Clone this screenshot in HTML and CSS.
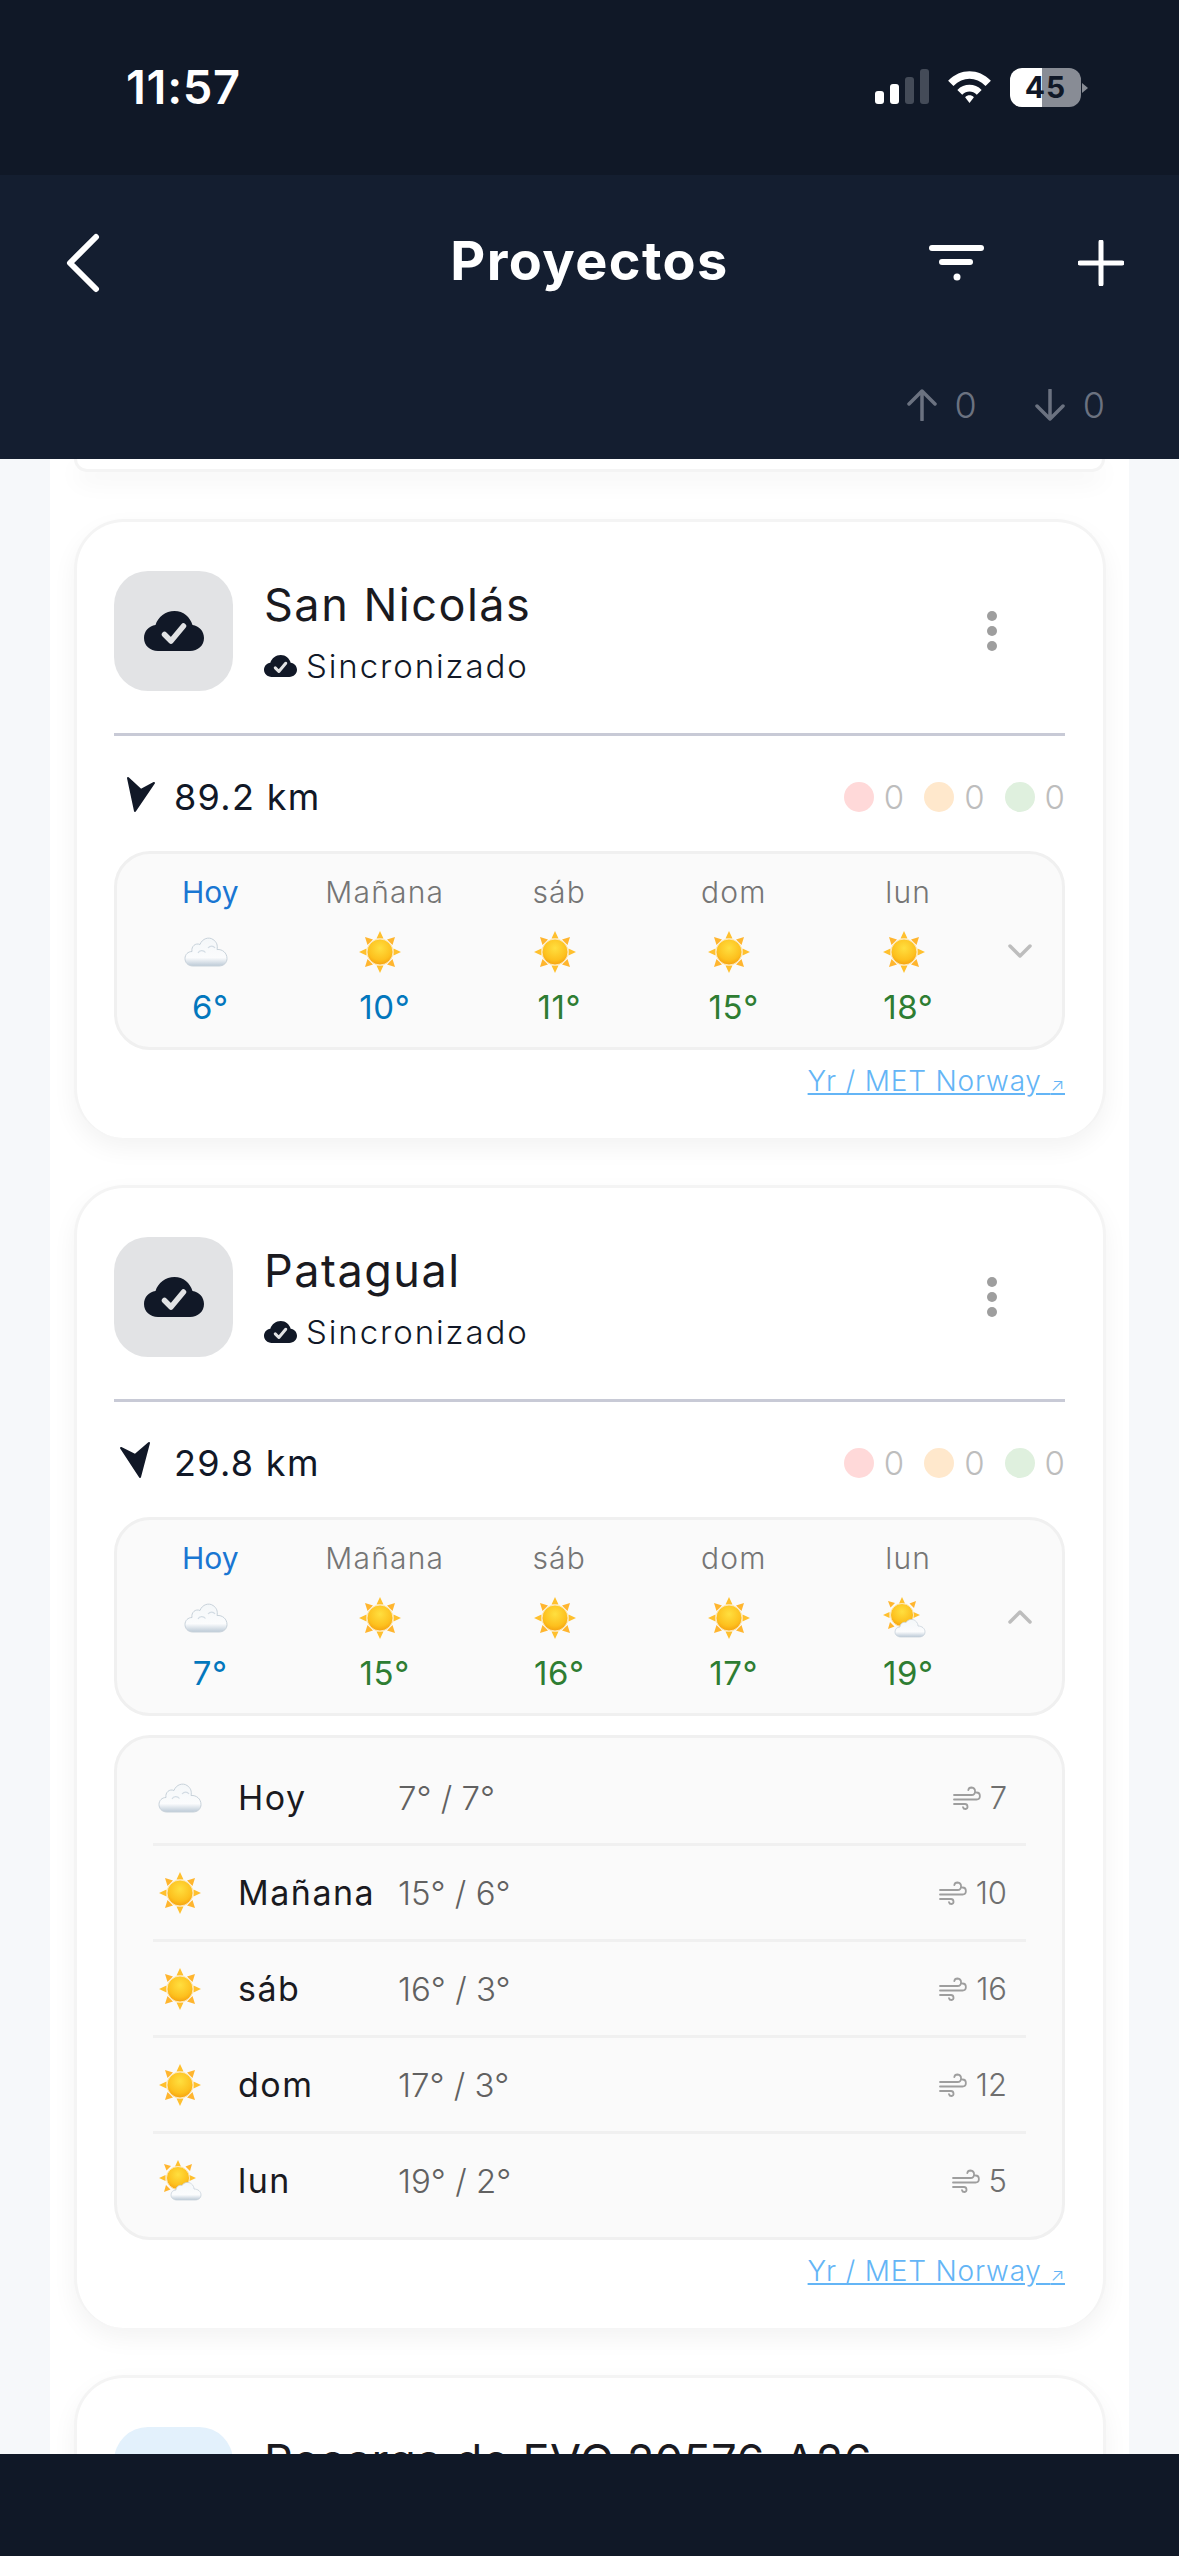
FILE: index.html
```html
<!doctype html>
<html lang="es">
    <head>
        <meta charset="UTF-8" />
        <title>Proyectos</title>
        <link rel="stylesheet" href="styles.css">
    </head>
    <body>
        <svg class="icon-defs" aria-hidden="true">
            <defs>
                <radialGradient id="disc" cx="50%" cy="35%" r="70%">
                    <stop offset="0" stop-color="#ffdf3f" />
                    <stop offset="0.65" stop-color="#fdc01e" />
                    <stop offset="1" stop-color="#f39a0c" />
                </radialGradient>
                <linearGradient id="fluff" x1="0" y1="0" x2="0" y2="1">
                    <stop offset="0" stop-color="#f4f7f9" />
                    <stop offset="0.7" stop-color="#fbfcfd" />
                    <stop offset="1" stop-color="#bccad7" />
                </linearGradient>
                <symbol id="rays" viewBox="0 0 44 44">
                    <path d="M22 1l3.500 7.500h-7zM22 43l-3.500-7.500h7zM1 22l7.500-3.500v7zM43 22l-7.500 3.500v-7z" fill="#ffc02e" />
                    <path d="M7 7l8 2.500-5.500 5.500zM37 7l-2.500 8-5.500-5.500zM7 37l2.500-8 5.500 5.500zM37 37l-8-2.500 5.500-5.500z" fill="#ffb52e" />
                </symbol>
                <symbol id="sun" viewBox="0 0 44 44">
                    <use href="#rays" />
                    <circle cx="22" cy="22" r="13" fill="url(#disc)" stroke="#ffe9b8" stroke-width="1" />
                </symbol>
                <symbol id="cloud" viewBox="0 0 44 44">
                    <path d="M9 36C3.500 36 1 32 1 28.500C1 24.500 4 21.500 8 21.500C7 16.500 11.500 12.500 16 14.500C18 8.500 25 6.500 29 9.500C32.500 11.500 34 15.500 33 19.500C38.500 19 43 23 43 28.500C43 32.500 40 36 35 36Z" fill="url(#fluff)" stroke="#c8d2da" stroke-width="1" />
                    <path d="M14 23c1.500-3 5.500-3 7.500-.5M24 18c2-2.500 5.500-2.500 7 0" fill="none" stroke="#d3dce4" stroke-width="1.200" />
                </symbol>
                <symbol id="sun-cloud" viewBox="0 0 44 44">
                    <path d="M20 1l3 6.500h-6zM1 19l6.500-3v6zM38 19l-6.500 3v-6zM20 38l-3-6.500h6z" fill="#ffc02e" />
                    <path d="M6 5l7 2-4.500 4.500zM34 5l-2 7-4.500-4.500zM6 33l2-7 4.500 4.500z" fill="#ffb52e" />
                    <circle cx="20" cy="19" r="11.500" fill="url(#disc)" stroke="#ffe9b8" stroke-width="1" />
                    <path d="M19 41C15 41 13 38.500 13 36C13 33 15 31 18 31C18 28 21 25.500 24 26.500C26 23 31 22.500 33.500 25C35.500 26.500 36 28.500 36 30C40 30 43 32.500 43 36C43 39 40.500 41 37 41Z" fill="url(#fluff)" stroke="#c8d2da" stroke-width="0.800" />
                </symbol>
                <symbol id="wind" viewBox="0 0 28 24">
                    <path d="M1 9h17.500c4.500 0 5-7 0-7.500c-2 0-3 1.200-3.200 2.700M1 13.500h22.500c4.500 0 4.500-7 0-7M1 18h11c3 0 3.500 4.500.5 5c-1.500 0-2.300-.8-2.500-1.800" fill="none" stroke="#9e9e9e" stroke-width="1.800" stroke-linecap="round" />
                </symbol>
                <symbol id="cloud-check" viewBox="0 0 60 40">
                    <path d="M14 40C6 40 0 34.500 0 27C0 20 5 15 11.500 14C14 6 21.500 0 30.500 0C39.500 0 46 6 48.500 14C55 15 60 20 60 27C60 34.500 54 40 46 40Z" fill="#111827" />
                    <path d="M20.500 23.500L27 30L39.500 15" fill="none" stroke="#e2e3e5" stroke-width="5.500" stroke-linecap="round" stroke-linejoin="round" />
                </symbol>
            </defs>
        </svg>

        <div class="status-bar">
            <div class="clock">11:57</div>
            <div class="status-icons">
                <div class="signal">
                    <span class="bar bar-1"></span>
                    <span class="bar bar-2"></span>
                    <span class="bar bar-3"></span>
                    <span class="bar bar-4"></span>
                </div>
                <svg class="wifi" viewBox="0 0 48 36">
                    <path d="M2 12C15-1 33-1 46 12L40.500 17.500C30.500 7.500 17.500 7.500 7.500 17.500Z" fill="#fff" />
                    <path d="M11.500 21.500C18.500 14.500 29.500 14.500 36.500 21.500L31.500 26.500C27 22 21 22 16.500 26.500Z" fill="#fff" />
                    <path d="M19.500 29C22 26.500 26 26.500 28.500 29L24 35Z" fill="#fff" />
                </svg>
                <div class="battery"><span>45</span></div>
                <span class="battery-nub"></span>
            </div>
        </div>

        <div class="app-header">
            <div class="nav-row">
                <svg class="back-icon" viewBox="0 0 36 60">
                    <path d="M31 4L5 30L31 56" fill="none" stroke="#fff" stroke-width="6" stroke-linecap="round" stroke-linejoin="round" />
                </svg>
                <div class="page-title">Proyectos</div>
                <div class="nav-actions">
                    <svg class="filter-icon" viewBox="0 0 56 36">
                        <rect x="0" y="0" width="55" height="6" rx="3" fill="#fff" />
                        <rect x="10" y="14" width="34" height="6" rx="3" fill="#fff" />
                        <circle cx="28" cy="32" r="3.500" fill="#fff" />
                    </svg>
                    <svg class="plus-icon" viewBox="0 0 46 46">
                        <path d="M23 2V44M2 23H44" stroke="#fff" stroke-width="5" stroke-linecap="round" />
                    </svg>
                </div>
            </div>
            <div class="sync-row">
                <div class="sync-item">
                    <svg class="sync-arrow" viewBox="0 0 30 32">
                        <path d="M15 31V2M2 15L15 2L28 15" fill="none" stroke="#6b7280" stroke-width="3.500" stroke-linecap="round" stroke-linejoin="round" />
                    </svg>
                    <span>0</span>
                </div>
                <div class="sync-item">
                    <svg class="sync-arrow" viewBox="0 0 30 32">
                        <path d="M15 1V30M2 17L15 30L28 17" fill="none" stroke="#6b7280" stroke-width="3.500" stroke-linecap="round" stroke-linejoin="round" />
                    </svg>
                    <span>0</span>
                </div>
            </div>
        </div>

        <div class="page">
            <div class="list">
                <div class="card-stub"></div>

                <div class="card">
                    <div class="card-head">
                        <div class="project-tile">
                            <svg class="tile-icon"><use href="#cloud-check" /></svg>
                        </div>
                        <div class="project-info">
                            <div class="project-name">San Nicolás</div>
                            <div class="project-sync">
                                <svg class="sync-icon"><use href="#cloud-check" /></svg>
                                <span>Sincronizado</span>
                            </div>
                        </div>
                        <div class="more-btn"><i></i><i></i><i></i></div>
                    </div>
                    <div class="card-divider"></div>
                    <div class="meta-row">
                        <div class="distance">
                            <svg class="nav-icon" viewBox="0 0 44 44">
                                <path d="M14 3L27 15L40 8L21 36Z" fill="#111827" stroke="#111827" stroke-width="2" stroke-linejoin="round" />
                            </svg>
                            <span>89.2 km</span>
                        </div>
                        <div class="counts">
                            <div class="count"><span class="dot dot-red"></span>0</div>
                            <div class="count"><span class="dot dot-amber"></span>0</div>
                            <div class="count"><span class="dot dot-green"></span>0</div>
                        </div>
                    </div>
                    <div class="forecast">
                        <div class="day">
                            <div class="day-name today">Hoy</div>
                            <svg class="day-icon"><use href="#cloud" /></svg>
                            <div class="day-temp cold">6°</div>
                        </div>
                        <div class="day">
                            <div class="day-name">Mañana</div>
                            <svg class="day-icon"><use href="#sun" /></svg>
                            <div class="day-temp cold">10°</div>
                        </div>
                        <div class="day">
                            <div class="day-name">sáb</div>
                            <svg class="day-icon"><use href="#sun" /></svg>
                            <div class="day-temp mild">11°</div>
                        </div>
                        <div class="day">
                            <div class="day-name">dom</div>
                            <svg class="day-icon"><use href="#sun" /></svg>
                            <div class="day-temp mild">15°</div>
                        </div>
                        <div class="day">
                            <div class="day-name">lun</div>
                            <svg class="day-icon"><use href="#sun" /></svg>
                            <div class="day-temp mild">18°</div>
                        </div>
                        <svg class="chevron" viewBox="0 0 24 14">
                            <path d="M2 2L12 12L22 2" fill="none" stroke="#bdbdbd" stroke-width="3.500" stroke-linecap="round" stroke-linejoin="round" />
                        </svg>
                    </div>
                    <div class="source"><a href="#" class="source-link">Yr / MET Norway <span class="source-arrow">↗</span></a></div>
                </div>

                <div class="card">
                    <div class="card-head">
                        <div class="project-tile">
                            <svg class="tile-icon"><use href="#cloud-check" /></svg>
                        </div>
                        <div class="project-info">
                            <div class="project-name">Patagual</div>
                            <div class="project-sync">
                                <svg class="sync-icon"><use href="#cloud-check" /></svg>
                                <span>Sincronizado</span>
                            </div>
                        </div>
                        <div class="more-btn"><i></i><i></i><i></i></div>
                    </div>
                    <div class="card-divider"></div>
                    <div class="meta-row">
                        <div class="distance">
                            <svg class="nav-icon" viewBox="0 0 44 44">
                                <path d="M7 7L21 14L35 2L26 36Z" fill="#111827" stroke="#111827" stroke-width="2" stroke-linejoin="round" />
                            </svg>
                            <span>29.8 km</span>
                        </div>
                        <div class="counts">
                            <div class="count"><span class="dot dot-red"></span>0</div>
                            <div class="count"><span class="dot dot-amber"></span>0</div>
                            <div class="count"><span class="dot dot-green"></span>0</div>
                        </div>
                    </div>
                    <div class="forecast">
                        <div class="day">
                            <div class="day-name today">Hoy</div>
                            <svg class="day-icon"><use href="#cloud" /></svg>
                            <div class="day-temp cold">7°</div>
                        </div>
                        <div class="day">
                            <div class="day-name">Mañana</div>
                            <svg class="day-icon"><use href="#sun" /></svg>
                            <div class="day-temp mild">15°</div>
                        </div>
                        <div class="day">
                            <div class="day-name">sáb</div>
                            <svg class="day-icon"><use href="#sun" /></svg>
                            <div class="day-temp mild">16°</div>
                        </div>
                        <div class="day">
                            <div class="day-name">dom</div>
                            <svg class="day-icon"><use href="#sun" /></svg>
                            <div class="day-temp mild">17°</div>
                        </div>
                        <div class="day">
                            <div class="day-name">lun</div>
                            <svg class="day-icon"><use href="#sun-cloud" /></svg>
                            <div class="day-temp mild">19°</div>
                        </div>
                        <svg class="chevron" viewBox="0 0 24 14">
                            <path d="M2 12L12 2L22 12" fill="none" stroke="#bdbdbd" stroke-width="3.500" stroke-linecap="round" stroke-linejoin="round" />
                        </svg>
                    </div>
                    <div class="daily">
                        <div class="daily-row">
                            <svg class="daily-icon"><use href="#cloud" /></svg>
                            <div class="daily-name">Hoy</div>
                            <div class="daily-temp">7° / 7°</div>
                            <div class="daily-wind"><svg class="wind-icon"><use href="#wind" /></svg>7</div>
                        </div>
                        <div class="daily-row">
                            <svg class="daily-icon"><use href="#sun" /></svg>
                            <div class="daily-name">Mañana</div>
                            <div class="daily-temp">15° / 6°</div>
                            <div class="daily-wind"><svg class="wind-icon"><use href="#wind" /></svg>10</div>
                        </div>
                        <div class="daily-row">
                            <svg class="daily-icon"><use href="#sun" /></svg>
                            <div class="daily-name">sáb</div>
                            <div class="daily-temp">16° / 3°</div>
                            <div class="daily-wind"><svg class="wind-icon"><use href="#wind" /></svg>16</div>
                        </div>
                        <div class="daily-row">
                            <svg class="daily-icon"><use href="#sun" /></svg>
                            <div class="daily-name">dom</div>
                            <div class="daily-temp">17° / 3°</div>
                            <div class="daily-wind"><svg class="wind-icon"><use href="#wind" /></svg>12</div>
                        </div>
                        <div class="daily-row">
                            <svg class="daily-icon"><use href="#sun-cloud" /></svg>
                            <div class="daily-name">lun</div>
                            <div class="daily-temp">19° / 2°</div>
                            <div class="daily-wind"><svg class="wind-icon"><use href="#wind" /></svg>5</div>
                        </div>
                    </div>
                    <div class="source"><a href="#" class="source-link">Yr / MET Norway <span class="source-arrow">↗</span></a></div>
                </div>

                <div class="card">
                    <div class="card-head">
                        <div class="project-tile tile-blue"></div>
                        <div class="project-info info-top">
                            <div class="project-name name-tight">Recarga de EVG 20576-A26</div>
                        </div>
                    </div>
                </div>
            </div>
        </div>

        <div class="bottom-bar"></div>
    </body>
</html>
```

FILE: styles.css
```css
:root {
    --status-bg: #101827;
    --header-bg: #141e30;
    --page-bg: #f6f8fa;
    --ink: #111827;
    --line: #f0f0f0;
    --muted: #757575;
}

* {
    box-sizing: border-box;
}

body {
    margin: 0;
    width: 1179px;
    height: 2556px;
    display: flex;
    flex-direction: column;
    overflow: hidden;
    background-color: var(--page-bg);
    color: var(--ink);
    font-family: Inter, "Noto Sans", sans-serif;
}

.icon-defs {
    position: absolute;
    width: 0;
    height: 0;
}

/* Status bar */
.status-bar {
    height: 175px;
    flex-shrink: 0;
    background-color: var(--status-bg);
    display: flex;
    justify-content: space-between;
    padding: 60px 91px 0 126px;
}

.clock {
    color: #fff;
    font-size: 47px;
    line-height: 54px;
    font-weight: 600;
    letter-spacing: 0.7px;
}

.status-icons {
    display: flex;
    align-items: flex-start;
    padding-top: 8px;
}

.signal {
    display: flex;
    align-items: flex-end;
    gap: 6px;
    height: 36px;
    margin-right: 17px;
}

.bar {
    width: 9px;
    border-radius: 3px;
    background-color: #fff;
}

.bar-1 {
    height: 13px;
}

.bar-2 {
    height: 20px;
}

.bar-3 {
    height: 27px;
    background-color: #444b58;
}

.bar-4 {
    height: 35px;
    background-color: #444b58;
}

.wifi {
    width: 47px;
    height: 35px;
    margin-top: 1px;
    margin-right: 17px;
}

.battery {
    width: 71px;
    height: 39px;
    border-radius: 12px;
    background: linear-gradient(90deg, #fff 45%, #888c95 45%);
    color: var(--status-bg);
    font-size: 30px;
    font-weight: 700;
    line-height: 39px;
    text-align: center;
    letter-spacing: 1px;
}

.battery-nub {
    width: 6px;
    height: 10px;
    margin-top: 15px;
    margin-left: 1px;
    background-color: #888c95;
    clip-path: polygon(0 0, 100% 50%, 0 100%);
}

/* App header */
.app-header {
    height: 284px;
    flex-shrink: 0;
    background-color: var(--header-bg);
    padding-top: 58px;
}

.nav-row {
    display: grid;
    grid-template-columns: 1fr auto 1fr;
    align-items: center;
    height: 56px;
}

.back-icon {
    width: 36px;
    height: 60px;
    margin-left: 65px;
}

.page-title {
    color: #fff;
    font-size: 54px;
    font-weight: 700;
    letter-spacing: 1.4px;
    margin-top: -6px;
}

.nav-actions {
    display: flex;
    justify-content: flex-end;
    align-items: center;
    gap: 93px;
    padding-right: 55px;
}

.filter-icon {
    width: 56px;
    height: 36px;
}

.plus-icon {
    width: 46px;
    height: 46px;
}

.sync-row {
    display: flex;
    justify-content: flex-end;
    gap: 58px;
    padding-right: 74px;
    margin-top: 98px;
    color: #6b7280;
    font-size: 36px;
    font-weight: 300;
}

.sync-item {
    display: flex;
    align-items: center;
    gap: 18px;
    height: 36px;
}

.sync-arrow {
    width: 30px;
    height: 32px;
}

/* Project list */
.page {
    flex: 1;
    min-height: 0;
    overflow: hidden;
    padding: 0 50px;
}

.list {
    width: 1079px;
    height: 100%;
    background-color: #fff;
    padding: 0 24px;
}

.card-stub {
    height: 13px;
    margin-bottom: 47px;
    border: 3px solid #f4f4f4;
    border-top: 0;
    border-radius: 0 0 50px 50px;
    box-shadow: 0 10px 24px rgba(0, 0, 0, 0.05);
}

.card {
    width: 1032px;
    margin-bottom: 47px;
    padding: 49px 38px 0 37px;
    background-color: #fff;
    border: 3px solid #f4f4f4;
    border-bottom-width: 0;
    border-radius: 50px;
    box-shadow: 0 10px 24px rgba(0, 0, 0, 0.05);
}

.card-head {
    display: flex;
    align-items: center;
    height: 120px;
}

.project-tile {
    width: 119px;
    height: 120px;
    flex-shrink: 0;
    border-radius: 34px;
    background-color: #e2e3e5;
    display: flex;
    align-items: center;
    justify-content: center;
}

.tile-blue {
    background-color: #e3f1fc;
}

.tile-icon {
    width: 60px;
    height: 40px;
}

.project-info {
    flex: 1;
    padding-left: 31px;
}

.info-top {
    align-self: flex-start;
    padding-top: 5px;
}

.project-name {
    font-size: 45px;
    line-height: 54px;
    margin-top: 2px;
    color: #1a1a1f;
    letter-spacing: 1.5px;
}

.name-tight {
    letter-spacing: 0.4px;
}

.project-sync {
    display: flex;
    align-items: center;
    gap: 9px;
    margin-top: 14px;
    font-size: 33px;
    line-height: 40px;
    font-weight: 300;
    letter-spacing: 1.9px;
}

.sync-icon {
    width: 33px;
    height: 22px;
}

.more-btn {
    display: flex;
    flex-direction: column;
    gap: 5px;
    margin-right: 68px;
}

.more-btn i {
    display: block;
    width: 10px;
    height: 10px;
    border-radius: 50%;
    background-color: #9e9e9e;
}

.card-divider {
    height: 3px;
    margin-top: 42px;
    background-color: #c8cad6;
}

.meta-row {
    display: flex;
    justify-content: space-between;
    align-items: center;
    height: 50px;
    margin: 36px 0 29px;
}

.distance {
    display: flex;
    align-items: center;
    font-size: 36px;
    letter-spacing: 1.3px;
}

.nav-icon {
    width: 44px;
    height: 44px;
    margin-right: 16px;
}

.counts {
    display: flex;
    gap: 20px;
    color: #bdbdbd;
    font-size: 33px;
    font-weight: 300;
}

.count {
    display: flex;
    align-items: center;
    gap: 10px;
}

.dot {
    width: 30px;
    height: 30px;
    border-radius: 50%;
}

.dot-red {
    background-color: #ffd9d9;
}

.dot-amber {
    background-color: #ffe8cc;
}

.dot-green {
    background-color: #dff0de;
}

/* Five day strip */
.forecast {
    display: flex;
    align-items: center;
    height: 199px;
    padding-left: 6px;
    background-color: #fafafa;
    border: 3px solid var(--line);
    border-radius: 36px;
}

.day {
    width: 174.5px;
    display: flex;
    flex-direction: column;
    align-items: center;
}

.day-name {
    color: var(--muted);
    font-size: 30px;
    line-height: 40px;
    font-weight: 300;
    letter-spacing: 1.2px;
}

.day-name.today {
    color: #1976d2;
    font-weight: 400;
    letter-spacing: 0;
}

.day-icon {
    width: 44px;
    height: 44px;
    margin: 18px 9px 11px 0;
}

.day-temp {
    font-size: 33px;
    line-height: 44px;
    font-weight: 400;
    letter-spacing: 0.6px;
}

.cold {
    color: #0277bd;
}

.mild {
    color: #2e7d32;
}

.chevron {
    width: 24px;
    height: 14px;
    margin-left: 12px;
}

/* Daily detail */
.daily {
    margin-top: 19px;
    padding: 12px 36px 10px;
    background-color: #fafafa;
    border: 3px solid var(--line);
    border-radius: 36px;
}

.daily-row {
    display: flex;
    align-items: center;
    height: 96px;
    padding: 0 19px 0 5px;
    border-bottom: 3px solid var(--line);
}

.daily-row:first-child {
    padding-top: 2px;
}

.daily-row:last-child {
    height: 93px;
    border-bottom: 0;
}

.daily-icon {
    width: 44px;
    height: 44px;
    flex-shrink: 0;
    margin-right: 36px;
}

.daily-name {
    width: 160px;
    color: #1a1a1f;
    font-size: 34px;
    letter-spacing: 1.5px;
}

.daily-temp {
    flex: 1;
    color: #616161;
    font-size: 33px;
    font-weight: 300;
}

.daily-wind {
    display: flex;
    align-items: center;
    gap: 9px;
    color: #6f6f6f;
    font-size: 31px;
    font-weight: 300;
}

.wind-icon {
    width: 28px;
    height: 24px;
}

.source {
    display: flex;
    justify-content: flex-end;
    height: 88px;
    padding-top: 13px;
}

.source-link {
    color: #64b5f6;
    font-size: 28px;
    line-height: 36px;
    font-weight: 300;
    letter-spacing: 0.8px;
    height: 36px;
}

.source-arrow {
    font-size: 18px;
}

.bottom-bar {
    height: 102px;
    flex-shrink: 0;
    background-color: var(--status-bg);
}
```
